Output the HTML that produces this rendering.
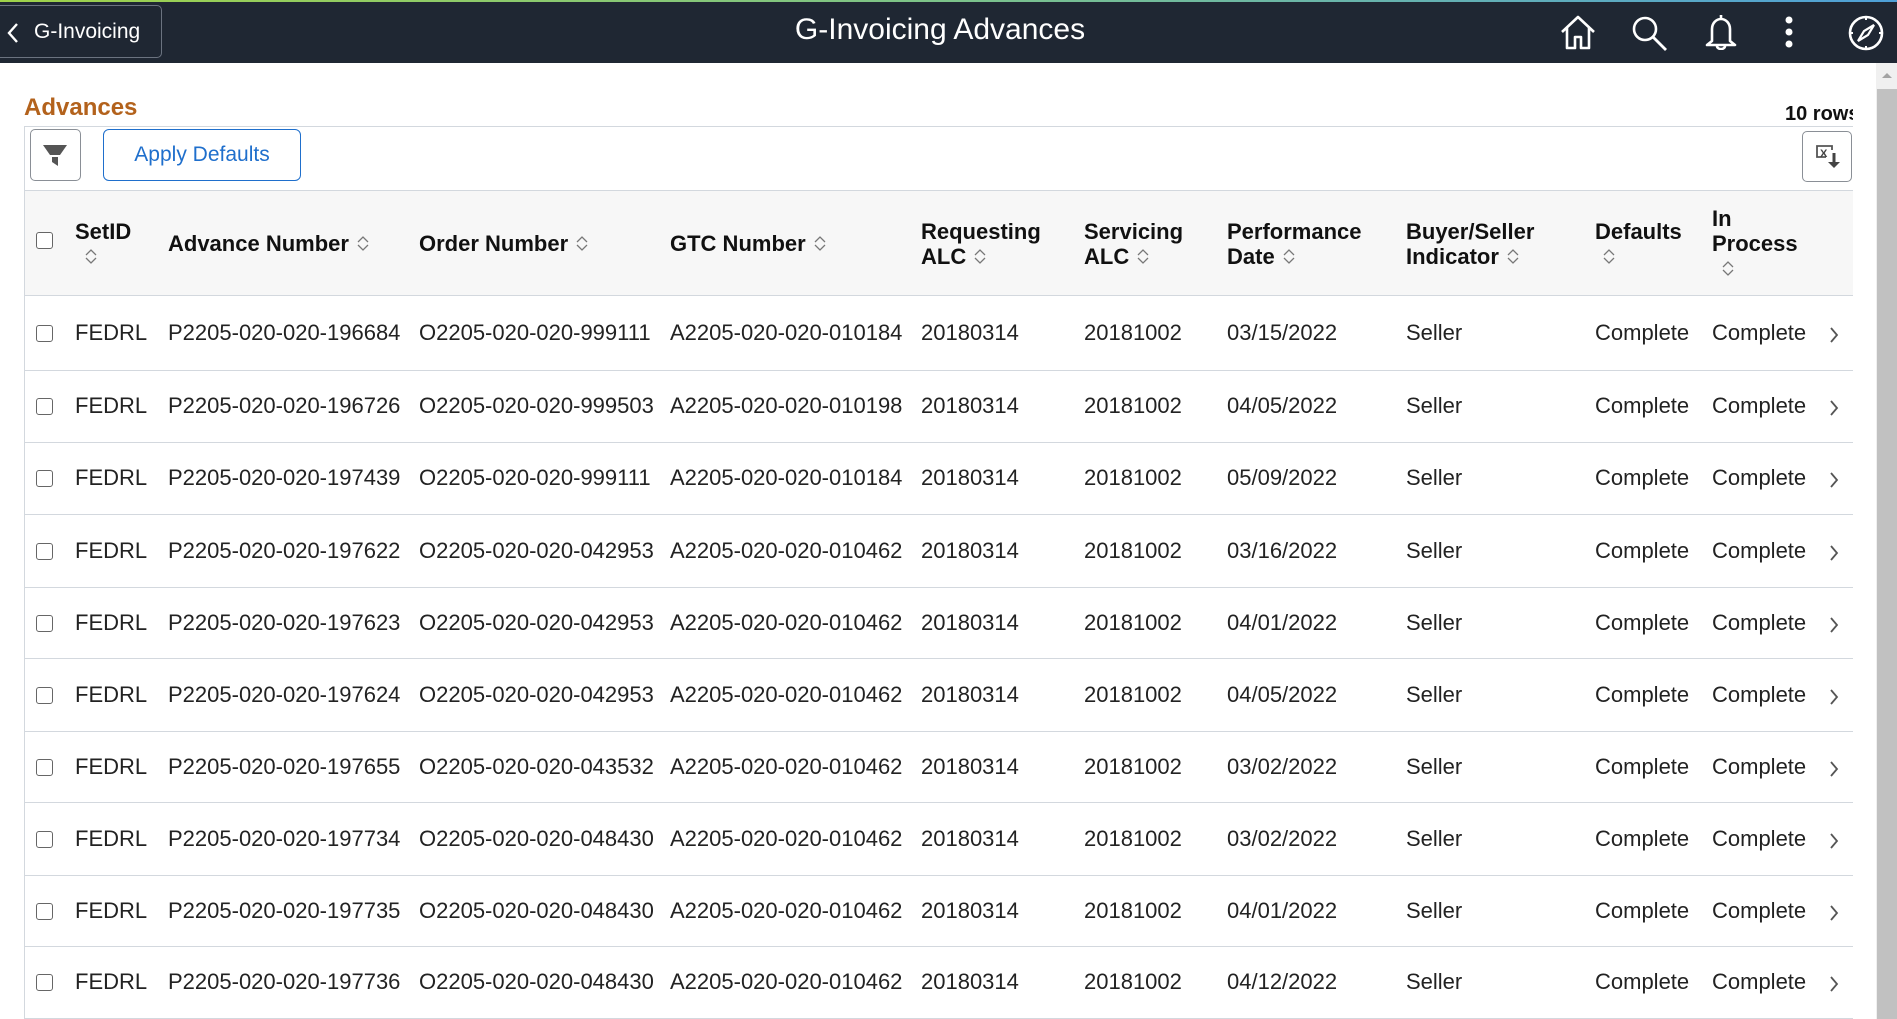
<!DOCTYPE html>
<html><head><meta charset="utf-8">
<style>
*{margin:0;padding:0;box-sizing:border-box}
body{width:1897px;height:1019px;overflow:hidden;background:#fff;font-family:"Liberation Sans",Arial,sans-serif;position:relative;color:#222}
.hdr{position:absolute;left:0;top:0;width:1897px;height:63px;background:#1f2733}
.topline{position:absolute;left:0;top:0;width:1897px;height:2px;background:linear-gradient(90deg,#9fd24a,#7cc38a 50%,#4ea0d8)}
.back{position:absolute;left:-6px;top:5px;width:168px;height:53px;border:1px solid #6b7380;border-radius:5px}
.backtxt{position:absolute;left:34px;top:20px;color:#fff;font-size:21px}
.title{position:absolute;left:0;width:1880px;text-align:center;top:13px;color:#fff;font-size:30px}
.abs{position:absolute}
.adv{position:absolute;left:24px;top:94px;font-size:24px;font-weight:bold;color:#b3621c}
.rows{position:absolute;left:1785px;top:103px;font-size:20px;font-weight:bold;color:#111;width:68px;overflow:hidden;white-space:nowrap}
.tb{position:absolute;left:24px;top:126px;width:1829px;height:1px;background:#d3d8de}
.vl{position:absolute;left:24px;top:126px;width:1px;height:893px;background:#d3d8de}
.btn{position:absolute;border:1px solid #8a8f96;border-radius:5px;background:#fff}
.apply{position:absolute;left:103px;top:129px;width:198px;height:52px;border:1.5px solid #1f6fcc;border-radius:6px;color:#1f6fcc;font-size:21px;text-align:center;line-height:50px}
.thead{position:absolute;left:25px;top:190px;width:1828px;height:106px;background:#f7f7f7;border-top:1px solid #d3d8de;border-bottom:1px solid #d3d8de}
.h{position:absolute;font-size:22px;font-weight:bold;color:#111;line-height:25px}
.s{display:inline-block;width:12px;height:17px;vertical-align:-1px;margin-left:8px}
.cb{position:absolute;width:17px;height:17px;border:1.5px solid #666;border-radius:3px;background:#fff}
.row{position:absolute;left:25px;width:1828px;border-bottom:1px solid #d3d8de}
.c{position:absolute;font-size:22px;color:#222;white-space:nowrap}
.sb{position:absolute;left:1876px;top:63px;width:21px;height:956px;background:#f0f0f0}
.thumb{position:absolute;left:1877px;top:89px;width:20px;height:930px;background:#c1c1c1}
</style></head><body>
<div class="hdr"></div><div class="topline"></div>
<div class="back"></div>
<svg class="abs" style="left:6px;top:22px" width="14" height="22" viewBox="0 0 14 22"><path d="M11 2 L3 11 L11 20" fill="none" stroke="#fff" stroke-width="2.4"/></svg>
<div class="backtxt">G-Invoicing</div>
<div class="title">G-Invoicing Advances</div>
<svg class="abs" style="left:1558px;top:14px" width="40" height="37" viewBox="0 0 40 37"><path d="M4 18 L20 3 L36 18 M9 14 V34 H17 V23 H23 V34 H31 V14" fill="none" stroke="#fff" stroke-width="2.6" stroke-linejoin="round"/></svg>
<svg class="abs" style="left:1630px;top:15px" width="40" height="37" viewBox="0 0 40 37"><circle cx="15" cy="14" r="11" fill="none" stroke="#fff" stroke-width="2.6"/><path d="M23 22 L36 35" stroke="#fff" stroke-width="2.8"/></svg>
<svg class="abs" style="left:1704px;top:13px" width="34" height="37" viewBox="0 0 34 37"><path d="M17 2 V5 M8 28 V16 a9 10 0 0 1 18 0 V28 L31 32 H3 Z M13 33 a4 3 0 0 0 8 0" fill="none" stroke="#fff" stroke-width="2.6" stroke-linejoin="round"/></svg>
<svg class="abs" style="left:1782px;top:15px" width="14" height="34" viewBox="0 0 14 34"><circle cx="7" cy="5" r="3.5" fill="#fff"/><circle cx="7" cy="17" r="3.5" fill="#fff"/><circle cx="7" cy="29" r="3.5" fill="#fff"/></svg>
<svg class="abs" style="left:1848px;top:15px" width="36" height="36" viewBox="0 0 36 36"><circle cx="18" cy="18" r="16" fill="none" stroke="#fff" stroke-width="2.6"/><path d="M26 10 L20 20 L10 26 L16 16 Z" fill="none" stroke="#fff" stroke-width="2.2"/><path d="M18 3 V5 M18 31 V33 M3 18 H5 M31 18 H33" stroke="#fff" stroke-width="2"/></svg>

<div class="adv">Advances</div>
<div class="rows">10 rows</div>
<div class="tb"></div><div class="vl"></div>
<div class="btn" style="left:30px;top:129px;width:51px;height:52px"></div>
<svg class="abs" style="left:42px;top:142px" width="26" height="26" viewBox="0 0 26 26"><path d="M1 3 H25 L18 13 H8 Z" fill="#555"/><path d="M10 15 H16 V24 L10 20 Z" fill="#555"/></svg>
<div class="apply">Apply Defaults</div>
<div class="btn" style="left:1802px;top:131px;width:50px;height:51px"></div>
<svg class="abs" style="left:1814px;top:143px" width="28" height="28" viewBox="0 0 28 28"><path d="M12 14 H3 V3 H18 V7" fill="none" stroke="#555" stroke-width="1.8"/><text x="6" y="14" font-family="Liberation Sans,Arial" font-size="11" font-weight="bold" fill="#444">X</text><path d="M20 10 V20" stroke="#444" stroke-width="3"/><path d="M14 19 H26 L20 25 Z" fill="#444"/></svg>

<div class="thead"></div>
<div class="cb" style="left:36px;top:232px"></div>
<svg width="0" height="0" style="position:absolute"><defs><symbol id="srt" viewBox="0 0 12 17"><path d="M1 7 L6 2 L11 7 M1 10 L6 15 L11 10" fill="none" stroke="#777" stroke-width="1.3"/></symbol></defs></svg>
<div class="h" style="left:75px;top:219px">SetID<br><svg class="s" style="margin-left:10px"><use href="#srt"/></svg></div>
<div class="h" style="left:168px;top:231px">Advance Number<svg class="s"><use href="#srt"/></svg></div>
<div class="h" style="left:419px;top:231px">Order Number<svg class="s"><use href="#srt"/></svg></div>
<div class="h" style="left:670px;top:231px">GTC Number<svg class="s"><use href="#srt"/></svg></div>
<div class="h" style="left:921px;top:219px">Requesting<br>ALC<svg class="s"><use href="#srt"/></svg></div>
<div class="h" style="left:1084px;top:219px">Servicing<br>ALC<svg class="s"><use href="#srt"/></svg></div>
<div class="h" style="left:1227px;top:219px">Performance<br>Date<svg class="s"><use href="#srt"/></svg></div>
<div class="h" style="left:1406px;top:219px">Buyer/Seller<br>Indicator<svg class="s"><use href="#srt"/></svg></div>
<div class="h" style="left:1595px;top:219px">Defaults<br><svg class="s" style="margin-left:8px"><use href="#srt"/></svg></div>
<div class="h" style="left:1712px;top:206px">In<br>Process<br><svg class="s" style="margin-left:10px"><use href="#srt"/></svg></div>

<div id="body"></div>
<script>
var d=[["196684","999111","010184","03/15/2022"],["196726","999503","010198","04/05/2022"],["197439","999111","010184","05/09/2022"],["197622","042953","010462","03/16/2022"],["197623","042953","010462","04/01/2022"],["197624","042953","010462","04/05/2022"],["197655","043532","010462","03/02/2022"],["197734","048430","010462","03/02/2022"],["197735","048430","010462","04/01/2022"],["197736","048430","010462","04/12/2022"]];
var tops=[296,370,442,514,587,658,731,802,875,946,1018],h="";
for(var i=0;i<10;i++){var t=tops[i],b=tops[i+1],m=(t+b)/2,ty=m-13;
h+='<div class="row" style="top:'+t+'px;height:'+(b-t+1)+'px"></div>';
h+='<div class="cb" style="left:36px;top:'+(m-8)+'px"></div>';
var cols=[[75,"FEDRL"],[168,"P2205-020-020-"+d[i][0]],[419,"O2205-020-020-"+d[i][1]],[670,"A2205-020-020-"+d[i][2]],[921,"20180314"],[1084,"20181002"],[1227,d[i][3]],[1406,"Seller"],[1595,"Complete"],[1712,"Complete"]];
for(var j=0;j<cols.length;j++)h+='<div class="c" style="left:'+cols[j][0]+'px;top:'+ty+'px">'+cols[j][1]+'</div>';
h+='<svg class="abs" style="left:1829px;top:'+(m-6)+'px" width="10" height="16" viewBox="0 0 10 16"><path d="M2 1 L8 8 L2 15" fill="none" stroke="#555" stroke-width="1.8"/></svg>';}
document.getElementById("body").innerHTML=h;
</script>
<div class="sb"></div>
<svg class="abs" style="left:1880px;top:70px" width="14" height="10" viewBox="0 0 14 10"><path d="M2 8 L7 3 L12 8 Z" fill="#a3a3a3"/></svg>
<div class="thumb"></div>
</body></html>
